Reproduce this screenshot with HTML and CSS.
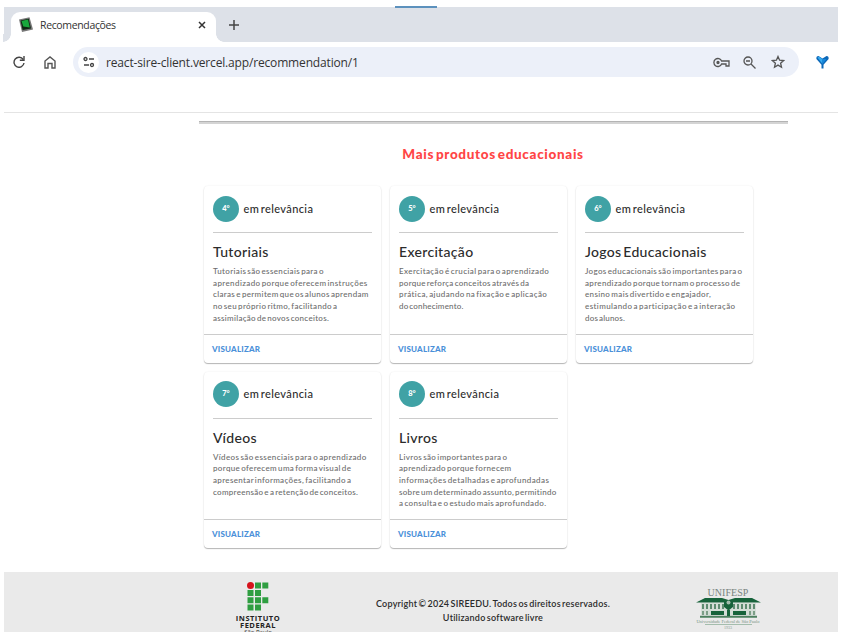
FILE: index.html
```html
<!DOCTYPE html>
<html lang="pt-BR">
<head>
<meta charset="utf-8">
<title>Recomendações</title>
<link rel="stylesheet" href="styles.css">
</head>
<body>
<div class="window">
  <header class="tabs">
    <div class="tab">
      <svg class="favicon" width="14" height="16" viewBox="0 0 14 16"><path d="M0 2.500 10.500.3 14 12.500 3 15z" fill="#777"/><path d="M1.500 3.500 9.700 1.700 12 11.500 3.600 13z" fill="#102713"/><path d="M2.500 4 9 2.600 10.800 10.500 4.300 9.500z" fill="#18a73c"/></svg>
      <span class="tab-title">Recomendações</span>
      <svg class="close" width="8" height="8" viewBox="0 0 8 8"><path d="M1 1l6 6M7 1L1 7" stroke="#333" stroke-width="1.500"/></svg>
    </div>
    <svg class="plus" width="10" height="10" viewBox="0 0 10 10"><path d="M5 0v10M0 5h10" stroke="#444" stroke-width="1.500"/></svg>
    <i class="marker"></i>
  </header>
  <nav class="toolbar">
    <svg class="reload" width="12" height="12" viewBox="0 0 12 12" fill="none" stroke="#444" stroke-width="1.400"><path d="M10.200 3.500A5 5 0 1 0 11 7"/><path d="M11 0v4.300H6.800"/></svg>
    <svg class="home" width="12" height="13" viewBox="0 0 12 13" fill="none" stroke="#555" stroke-width="1.400"><path d="M1 12V5l5-4 5 4v7H8V7.500H4V12z"/></svg>
    <div class="address">
      <span class="site"><svg width="12" height="12" viewBox="0 0 12 12" fill="none" stroke="#444" stroke-width="1.300"><circle cx="2.500" cy="3" r="1.500"/><path d="M6 3h5M1 9h5"/><circle cx="9" cy="9" r="1.500"/></svg></span>
      <span class="url">react-sire-client.vercel.app/recommendation/1</span>
      <svg class="key" width="17" height="11" viewBox="0 0 17 11" fill="none" stroke="#555" stroke-width="1.300"><path d="M8.600 4H16v5h-3V7H8.600a4 4 0 1 1 0-3z"/><circle cx="5" cy="5.500" r="1" fill="#555"/></svg>
      <svg class="lens" width="13" height="13" viewBox="0 0 13 13" fill="none" stroke="#555" stroke-width="1.300"><circle cx="5" cy="5" r="4"/><path d="M3 5h4M8 8l4.500 4.500"/></svg>
      <svg class="star" width="14" height="14" viewBox="0 0 14 14" fill="none" stroke="#555" stroke-width="1.300"><path d="M7 1.500l1.600 3.700 4 .4-3 2.600.9 4L7 10.100l-3.500 2.100.9-4-3-2.600 4-.4z"/></svg>
    </div>
    <svg class="extension" width="13" height="13" viewBox="0 0 13 13"><path d="M2.500 0Q0 0 .4 3L5.500 8.800V12.500h2V8.800L12.600 3Q13 0 10.500 0L6.500 2.500z" fill="#0d68b8"/><path d="M1.500 1.500l5 6.500V3L3 .8z" fill="#36aaf0"/><path d="M6.500 3v5l4-5z" fill="#1688dc"/></svg>
  </nav>
  <div class="page-bar"></div>
  <main>
    <h1>Mais produtos educacionais</h1>
    <section class="cards">
      <article class="card">
        <div class="rank"><b>4°</b><span>em relevância</span></div>
        <h2>Tutoriais</h2>
        <p><span>Tutoriais são essenciais para o</span><span class="wide">aprendizado porque oferecem instruções</span><span>claras e permitem que os alunos aprendam</span><span>no seu próprio ritmo, facilitando a</span><span class="tight">assimilação de novos conceitos.</span></p>
        <a>VISUALIZAR</a>
      </article>
      <article class="card">
        <div class="rank"><b>5°</b><span>em relevância</span></div>
        <h2>Exercitação</h2>
        <p><span class="wide">Exercitação é crucial para o aprendizado</span><span class="tight">porque reforça conceitos através da</span><span class="wide">prática, ajudando na fixação e aplicação</span><span class="tighter">do conhecimento.</span></p>
        <a>VISUALIZAR</a>
      </article>
      <article class="card">
        <div class="rank"><b>6°</b><span>em relevância</span></div>
        <h2>Jogos Educacionais</h2>
        <p><span>Jogos educacionais são importantes para o</span><span>aprendizado porque tornam o processo de</span><span>ensino mais divertido e engajador,</span><span class="wide">estimulando a participação e a interação</span><span class="tighter">dos alunos.</span></p>
        <a>VISUALIZAR</a>
      </article>
      <article class="card">
        <div class="rank"><b>7°</b><span>em relevância</span></div>
        <h2>Vídeos</h2>
        <p><span class="wide">Vídeos são essenciais para o aprendizado</span><span>porque oferecem uma forma visual de</span><span>apresentar informações, facilitando a</span><span class="tight">compreensão e a retenção de conceitos.</span></p>
        <a>VISUALIZAR</a>
      </article>
      <article class="card">
        <div class="rank"><b>8°</b><span>em relevância</span></div>
        <h2>Livros</h2>
        <p><span>Livros são importantes para o</span><span>aprendizado porque fornecem</span><span class="wide">informações detalhadas e aprofundadas</span><span class="tight">sobre um determinado assunto, permitindo</span><span>a consulta e o estudo mais aprofundado.</span></p>
        <a>VISUALIZAR</a>
      </article>
    </section>
  </main>
  <footer>
    <div class="federal">
      <svg width="22" height="29" viewBox="0 0 22 29" fill="#2f9e41"><circle cx="3.500" cy="3.500" r="3.500" fill="#d5131c"/><path d="M8 .5h6v6H8zM15.300.5h6v6h-6zM.5 8h6v6h-6zM8 8h6v6H8zM.5 15.200h6v6h-6zM8 15.200h6v6H8zM15.300 15.200h6v6h-6zM.5 22.500h6v6h-6zM8 22.500h6v6H8z"/></svg>
      <strong class="institute">INSTITUTO</strong><strong>FEDERAL</strong><small>São Paulo</small>
    </div>
    <div class="copyright"><span>Copyright © 2024 SIREEDU. Todos os direitos reservados.</span><span>Utilizando software livre</span></div>
    <div class="unifesp">
      <span class="name">UNIFESP</span>
      <svg width="65" height="22" viewBox="0 0 65 22"><path d="M0 5.500L9 1h17L32.500 3 39 1h17L65 5.500z" fill="#17633b"/><path d="M5 6h55v12H5z" fill="#d3ddd6"/><path d="M7 7v5M11 7v5M15 7v5M19 7v5M23 7v5M27 7v5M38 7v5M42 7v5M46 7v5M50 7v5M54 7v5M58 7v5" stroke="#37704f" stroke-width="1.500"/><path d="M7 14v4M11 14v4M54 14v4M58 14v4" stroke="#60896e" stroke-width="1.500"/><path d="M15 14h13v4H15zM37 14h13v4H37z" fill="#17633b"/><path d="M4 19.700h57" stroke="#4c805f" stroke-width="2"/><path d="M28 4.500h9v5.500l-4.500 3.500L28 10z" fill="#17633b"/><circle cx="32.500" cy="5.500" r="2" fill="#a4bcae"/><path d="M31 13h3v6h-3z" fill="#17633b"/></svg>
      <span class="university">Universidade Federal de São Paulo</span>
      <i></i><small>1933</small>
    </div>
  </footer>
</div>
</body>
</html>
```
FILE: styles.css
```css
* { box-sizing: border-box; }
body { margin: 0; width: 851px; height: 632px; overflow: hidden; background: #fff; font-family: Lato, sans-serif; color: #2b2b2b; }
svg { display: block; flex: none; }
.window { width: 834px; height: 625px; margin: 7px 0 0 4px; display: flex; flex-direction: column; }
.tabs { height: 35px; flex: none; background: #dde1e8; display: flex; align-items: center; position: relative; }
.tab { width: 205px; height: 30px; margin: 5px 0 0 7px; padding: 0 10px 5px 8px; border-radius: 9px 9px 0 0; background: #fff; display: flex; align-items: center; position: relative; }
.tab::before, .tab::after { content: ""; position: absolute; bottom: 0; width: 8px; height: 8px; }
.tab::before { left: -8px; background: radial-gradient(circle at 0 0, #dde1e8 7.5px, #fff 8px); }
.tab::after { right: -8px; background: radial-gradient(circle at 100% 0, #dde1e8 7.5px, #fff 8px); }
.tab-title { margin-left: 7px; font: 10.5px "Open Sans", sans-serif; color: #333; letter-spacing: -.35px; flex: 1; }
.plus { margin-left: 13px; }
.marker { position: absolute; left: 391px; top: -1px; width: 42px; height: 2px; background: #5c91bd; }
.toolbar { height: 43px; flex: none; display: flex; align-items: center; padding: 0 0 3px 9px; }
.home { margin-left: 19px; }
.address { height: 30px; width: 726px; margin-left: 17px; border-radius: 15px; background: #ecf0f9; display: flex; align-items: center; padding: 0 14px 0 5px; }
.site { width: 21px; height: 21px; border-radius: 50%; background: #fff; display: grid; place-items: center; }
.url { margin-left: 7px; flex: 1; font: 12px "Open Sans", sans-serif; color: #333; white-space: nowrap; letter-spacing: -.16px; }
.lens { margin-left: 13px; }
.star { margin-left: 15px; }
.extension { margin-left: 17px; }
.page-bar { height: 28px; flex: none; border-bottom: 1px solid #e4e4e4; }
main { height: 459px; flex: none; width: 589px; margin-left: 194.5px; padding-top: 8px; }
main::before { content: ""; display: block; height: 2px; background: #d4d4d4; border-top: 1px solid #b4b4b4; }
h1 { margin: 20px 0 0; height: 20px; line-height: 20px; text-align: center; font-size: 13.5px; font-weight: 900; color: #ff4545; letter-spacing: .67px; word-spacing: -2px; }
.cards { margin: 22px 0 0 5.5px; display: grid; grid-template-columns: repeat(3, 176.5px); gap: 9px 9.5px; grid-auto-rows: 176.5px; }
.card { border-radius: 4px; background: #fff; box-shadow: 0 1px 1px #b5b5b5, 0 0 2px #ececec; display: flex; flex-direction: column; padding-top: 10px; }
.rank { height: 37px; margin: 0 9px; padding-bottom: 11px; border-bottom: 1px solid #ccc; display: flex; align-items: center; flex: none; font-size: 11px; font-weight: 500; letter-spacing: .38px; word-spacing: -1.5px; }
.rank span { margin-top: -1px; }
.rank b { width: 26px; height: 26px; line-height: 26px; border-radius: 50%; background: #40a2a5; color: #fff; text-align: center; font-size: 7.5px; font-weight: 900; letter-spacing: 0; margin-right: 4.5px; flex: none; }
h2 { margin: 10px 9px 0; height: 17px; line-height: 17px; font-size: 14px; font-weight: 500; letter-spacing: .32px; word-spacing: -2px; white-space: nowrap; flex: none; }
.card p { margin: 6px 9px 0; font-size: 8px; line-height: 11.7px; color: #6c6c6c; font-weight: 500; letter-spacing: .35px; word-spacing: -1.3px; white-space: nowrap; }
.card p span { display: table; }
.card p .wide { letter-spacing: .4px; }
.card p .tight { letter-spacing: .29px; }
.card p .tighter { letter-spacing: .18px; }
.card a { margin-top: auto; height: 29px; border-top: 1px solid #ccc; padding: 0 8px; line-height: 29px; font-size: 8px; font-weight: 900; color: #4a90d9; letter-spacing: .2px; flex: none; }
footer { flex: 1; min-height: 0; background: #eaeaea; display: grid; grid-template-columns: 506px 1fr; overflow: hidden; }
.federal { grid-area: 1 / 1; width: 70px; margin: 10px 0 0 219px; display: flex; flex-direction: column; align-items: center; }
.federal strong { font: bold 7.5px/7px "Open Sans", sans-serif; color: #222; letter-spacing: .5px; }
.federal .institute { margin-top: 4px; }
.federal small { font: 6px/7px "Open Sans", sans-serif; }
.copyright { grid-area: 1 / 1 / 2 / 3; width: 260px; margin: 25px 0 0 359px; font-size: 9px; line-height: 14.3px; font-weight: 600; letter-spacing: .23px; word-spacing: -1.2px; white-space: nowrap; display: flex; flex-direction: column; align-items: center; }
.unifesp { grid-area: 1 / 2; width: 70px; margin: 17px 0 0 183px; display: flex; flex-direction: column; align-items: center; }
.name { font: 10px/8px "Liberation Serif", serif; color: #79847f; letter-spacing: .05px; }
.university { font: 4.5px/5px "Liberation Serif", serif; color: #789483; white-space: nowrap; }
.unifesp i { width: 47px; height: 1px; background: #a4bdad; }
.unifesp small { font: 4px/6px "Liberation Serif", serif; color: #88a190; }
```
